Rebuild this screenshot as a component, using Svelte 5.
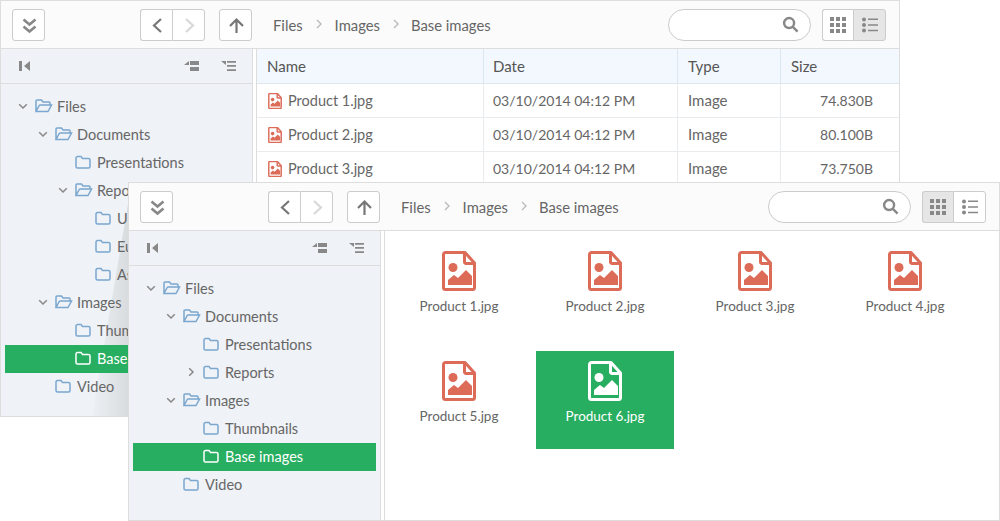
<script>
  const folderTree1 = [
    { n: 'Files', l: 0, open: true },
    { n: 'Documents', l: 1, open: true },
    { n: 'Presentations', l: 2 },
    { n: 'Reports', l: 2, open: true },
    { n: 'USA', l: 3 },
    { n: 'Europe', l: 3 },
    { n: 'Asia', l: 3 },
    { n: 'Images', l: 1, open: true },
    { n: 'Thumbnails', l: 2 },
    { n: 'Base images', l: 2, sel: true },
    { n: 'Video', l: 1 }
  ];
  const folderTree2 = [
    { n: 'Files', l: 0, open: true },
    { n: 'Documents', l: 1, open: true },
    { n: 'Presentations', l: 2 },
    { n: 'Reports', l: 2, closed: true },
    { n: 'Images', l: 1, open: true },
    { n: 'Thumbnails', l: 2 },
    { n: 'Base images', l: 2, sel: true },
    { n: 'Video', l: 1 }
  ];
  const rows = [
    ['Product 1.jpg', '74.830B'],
    ['Product 2.jpg', '80.100B'],
    ['Product 3.jpg', '73.750B']
  ];
  const tiles = ['Product 1.jpg', 'Product 2.jpg', 'Product 3.jpg', 'Product 4.jpg', 'Product 5.jpg', 'Product 6.jpg'];
</script>

{#snippet fileIcon()}
  <svg class="file" viewBox="0 0 34 40">
    <path class="fl" d="M1.500 3.500a2 2 0 0 1 2-2h19.500l9.500 10.500v24.500a2 2 0 0 1-2 2h-27a2 2 0 0 1-2-2z" />
    <path class="fl" d="M22.500 1.500v9.500a1.500 1.500 0 0 0 1.500 1.500h8.500" />
    <circle class="fi" cx="11" cy="16.500" r="4.500" />
    <path class="fi" d="M6 34v-5l6-5 4 3 8-8 6 6v9z" />
  </svg>
{/snippet}

{#snippet toolbar(grid)}
  <div class="toolbar">
    <button class="btn" aria-label="Collapse">
      <svg viewBox="0 0 32 32"><path class="ic" d="M10.500 10.500l6 5 6-5M10.500 17.500l6 5 6-5" /></svg>
    </button>
    <div class="group nav">
      <button class="btn" aria-label="Back">
        <svg viewBox="0 0 32 32"><path class="ic dark" d="M20 10l-7 6.500 7 6.500" /></svg>
      </button>
      <button class="btn" aria-label="Forward">
        <svg viewBox="0 0 32 32"><path class="ic pale" d="M13 10l7 6.500-7 6.500" /></svg>
      </button>
    </div>
    <button class="btn up" aria-label="Up">
      <svg viewBox="0 0 32 32"><path class="ic dark" d="M16.500 24V11M10 17l6.500-6.500L23 17" /></svg>
    </button>
    <nav class="crumbs">
      <span>Files</span>
      <svg class="sep" viewBox="0 0 8 12"><path d="M2 2l4 4-4 4" /></svg>
      <span>Images</span>
      <svg class="sep second" viewBox="0 0 8 12"><path d="M2 2l4 4-4 4" /></svg>
      <span>Base images</span>
    </nav>
    <div class="search">
      <svg viewBox="0 0 18 18"><circle cx="7.500" cy="7.500" r="5.300" /><path d="M11.500 11.500l5 5" /></svg>
    </div>
    <div class="group views">
      <button class="btn" class:on={grid} aria-label="Grid">
        <svg viewBox="0 0 16 16"><path class="dots" d="M0 0h4v4H0zM6 0h4v4H6zM12 0h4v4h-4zM0 6h4v4H0zM6 6h4v4H6zM12 6h4v4h-4zM0 12h4v4H0zM6 12h4v4H6zM12 12h4v4h-4z" /></svg>
      </button>
      <button class="btn" class:on={!grid} aria-label="List">
        <svg viewBox="0 0 16 16"><circle class="dots" cx="2" cy="2.500" r="2" /><circle class="dots" cx="2" cy="8" r="2" /><circle class="dots" cx="2" cy="13.500" r="2" /><path class="dots" d="M6 1.500h10v1.500H6zM6 7.200h10v1.500H6zM6 12.800h10v1.500H6z" /></svg>
      </button>
    </div>
  </div>
{/snippet}

{#snippet sidebar(items, shaded)}
  <aside class="side">
    {#if shaded}<span class="shade"></span>{/if}
    <div class="side-head">
      <svg class="sh" viewBox="0 0 11 10"><path d="M0 0h3v10H0zM11 0v10L5 5z" /></svg>
      <span class="grow"></span>
      <svg class="sh wide" viewBox="0 0 15 10"><path d="M0 4l5-4v4zM6 0h9v4H6zM6 6h9v4H6z" /></svg>
      <svg class="sh wide" viewBox="0 0 15 10"><path d="M0 0h5v4zM6 0h9v1.800H6zM6 4h9v1.800H6zM6 8.200h9V10H6z" /></svg>
    </div>
    <div class="tree">
      {#each items as it}
        <div class="row" class:sel={it.sel} style={`padding-left:${10 + it.l * 20}px`}>
          <span class="tog">
            {#if it.open}
              <svg viewBox="0 0 10 10"><path d="M1.200 3.200l3.800 3.800 3.800-3.800" /></svg>
            {:else if it.closed}
              <svg viewBox="0 0 10 10"><path d="M3.200 1.200l3.800 3.800-3.800 3.800" /></svg>
            {/if}
          </span>
          <span class="fold">
            {#if it.open}
              <svg viewBox="0 0 18 14"><path d="M1 12.500V2a1 1 0 0 1 1-1h4.500l1.500 2h6a1 1 0 0 1 1 1v2M1 12.500l3.200-6a1 1 0 0 1 .9-.5H16.500l-3.500 6.500z" /></svg>
            {:else}
              <svg class="closed" viewBox="0 0 16 14"><path d="M1 3a1.500 1.500 0 0 1 1.500-1.500H6l1.500 2h6A1.500 1.500 0 0 1 15 5v6.500a1.500 1.500 0 0 1-1.500 1.500h-11A1.500 1.500 0 0 1 1 11.500z" /></svg>
            {/if}
          </span>
          <span class="lbl">{it.n}</span>
        </div>
      {/each}
    </div>
  </aside>
  <div class="resizer"><span class="grip"></span></div>
{/snippet}

<div class="stage">
  <section class="win back">
    {@render toolbar(false)}
    <div class="body">
      {@render sidebar(folderTree1, true)}
      <div class="main">
        <div class="t-row head">
          <div class="c name">Name</div><div class="c">Date</div><div class="c">Type</div><div class="c">Size</div>
        </div>
        {#each rows as r}
          <div class="t-row">
            <div class="c name small"><span class="mini">{@render fileIcon()}</span>{r[0]}</div>
            <div class="c tiny">03/10/2014 04:12 PM</div>
            <div class="c lift">Image</div>
            <div class="c num tiny">{r[1]}</div>
          </div>
        {/each}
      </div>
    </div>
  </section>

  <section class="win front">
    {@render toolbar(true)}
    <div class="body">
      {@render sidebar(folderTree2, false)}
      <div class="main tiles">
        {#each tiles as t, i}
          <div class="tile" class:sel={i === 5}>
            {@render fileIcon()}
            <span>{t}</span>
          </div>
        {/each}
      </div>
    </div>
  </section>
</div>

<style>
  :global(body) { margin: 0; background: #fff; }
  .stage {
    position: relative;
    width: 1000px;
    height: 521px;
    overflow: hidden;
    font-family: "Lato", "Noto Sans", sans-serif;
    font-size: 15px;
    color: #666;
  }
  .win {
    position: absolute;
    box-sizing: border-box;
    display: flex;
    flex-direction: column;
    background: #fff;
    border: 1px solid #ddd;
  }
  .back { left: 0; top: 0; width: 900px; height: 417px; }
  .front { left: 128px; top: 182px; width: 872px; height: 339px; }

  .toolbar {
    display: flex;
    align-items: center;
    box-sizing: border-box;
    height: 48px;
    flex: none;
    padding: 0 13px 0 11px;
    background: #fbfbfb;
    border-bottom: 1px solid #ddd;
  }
  .btn {
    box-sizing: border-box;
    width: 33px;
    height: 32px;
    padding: 0;
    display: flex;
    align-items: center;
    justify-content: center;
    background: #fff;
    border: 1px solid #ccc;
    border-radius: 3px;
  }
  .btn svg { width: 32px; height: 32px; flex: none; }
  .ic { fill: none; stroke: #888; stroke-width: 2.6; }
  .ic.dark { stroke: #777; stroke-width: 2.2; }
  .ic.pale { stroke: #d8d8d8; stroke-width: 2.2; }
  .group { display: flex; }
  .group .btn:first-child { width: 32px; border-radius: 3px 0 0 3px; border-right: 0; }
  .group .btn:last-child { border-radius: 0 3px 3px 0; }
  .nav { margin-left: 95px; }
  .up { margin-left: 14px; }
  .crumbs {
    display: flex;
    align-items: center;
    margin: 1px 0 0 21px;
    flex: 1;
    font-size: 14.8px;
    line-height: 20px;
  }
  .sep { width: 8px; height: 12px; margin: 0 12px 2px; }
  .sep.second { margin-right: 11px; }
  .sep path { fill: none; stroke: #bbb; stroke-width: 1.4; }
  .search {
    box-sizing: border-box;
    width: 143px;
    height: 32px;
    margin-right: 11px;
    border: 1px solid #ccc;
    border-radius: 16px;
    background: #fff;
    display: flex;
    align-items: center;
    justify-content: flex-end;
    padding-right: 11px;
  }
  .search svg { width: 17px; height: 17px; }
  .search circle, .search path { fill: none; stroke: #888; stroke-width: 2.6; }
  .views .btn:first-child { width: 31px; }
  .views .btn svg { width: 16px; height: 16px; }
  .btn.on { background: #e6e6e6; }
  .dots { fill: #888; }

  .body { flex: 1; display: flex; min-height: 0; }
  .side {
    position: relative;
    box-sizing: border-box;
    width: 252px;
    flex: none;
    background: #eff2f6;
    border-right: 1px solid #ddd;
    display: flex;
    flex-direction: column;
  }
  .shade {
    position: absolute;
    left: 87px;
    top: 155px;
    width: 40px;
    bottom: 0;
    background: linear-gradient(to right, rgba(210, 213, 217, 0), #d9dcdf);
    clip-path: polygon(100% 0, 100% 100%, 10% 100%);
  }
  .side-head {
    box-sizing: border-box;
    height: 35px;
    flex: none;
    display: flex;
    align-items: center;
    padding: 0 16px 0 18px;
    border-bottom: 1px solid #ddd;
  }
  .grow { flex: 1; }
  .sh { width: 11px; height: 10px; fill: #888; }
  .sh.wide { width: 15px; height: 10px; margin-left: 22px; }
  .tree { position: relative; padding: 9px 4px; font-size: 14.5px; }
  .row {
    display: flex;
    align-items: center;
    height: 28px;
    box-sizing: border-box;
    padding-bottom: 2px;
    white-space: nowrap;
  }
  .row.sel { background: #27ae60; color: #fff; }
  .tog { width: 16px; flex: none; display: flex; justify-content: center; }
  .tog svg { width: 10px; height: 10px; fill: none; stroke: #888; stroke-width: 1.5; }
  .fold { width: 22px; flex: none; display: flex; justify-content: flex-end; margin-right: 4px; }
  .fold svg { width: 18px; height: 14px; fill: none; stroke: #7ba7cf; stroke-width: 1.5; }
  .fold svg.closed { width: 16px; margin-right: 2px; }
  .sel .fold svg { stroke: #fff; }

  .resizer {
    box-sizing: border-box;
    width: 4px;
    flex: none;
    padding-top: 12px;
    border-right: 1px solid #ddd;
    background: #fff;
    display: flex;
    align-items: center;
  }
  .grip {
    width: 3px;
    height: 24px;
    background-image: radial-gradient(#bbb 0.5px, transparent 0.6px);
    background-size: 2px 2px;
  }
  .main { flex: 1; min-width: 0; overflow: hidden; background: #fff; }
  .t-row {
    display: grid;
    grid-template-columns: 227px 194px 103px 1fr;
    height: 34px;
    box-sizing: border-box;
    border-bottom: 1px solid #e9ecef;
  }
  .t-row.head { background: #f2f8fe; height: 35px; border-bottom: 1px solid #dbe6ee; color: #555; }
  .c {
    display: flex;
    align-items: center;
    padding-left: 10px;
    border-right: 1px solid #e9ecef;
    white-space: nowrap;
  }
  .c:nth-child(2) { padding-left: 9px; }
  .head .c { border-right-color: #dbe6ee; padding-bottom: 1px; }
  .c:last-child { border-right: 0; }
  .c.lift { padding-bottom: 2px; }
  .c.small { font-size: 14.5px; }
  .c.tiny { font-size: 14px; }
  .c.num { justify-content: flex-end; padding-right: 26px; }
  .mini { width: 14px; height: 16px; margin: 0 6px 0 1px; display: inline-flex; }
  .mini :global(svg) { width: 14px; height: 16px; }
  .mini :global(.fl) { stroke-width: 3.6; }

  .tiles {
    display: grid;
    grid-template-columns: 130px 138px 138px 138px;
    grid-auto-rows: 98px;
    gap: 12px;
    padding: 10px 9px;
    align-content: start;
  }
  .tile {
    display: flex;
    flex-direction: column;
    align-items: center;
    padding-top: 10px;
    box-sizing: border-box;
    font-size: 13.5px;
    color: #666;
  }
  .tile span { margin-top: 5px; line-height: 20px; }
  .tile.sel { background: #27ae60; color: #fff; }
  :global(.file) { width: 34px; height: 40px; flex: none; }
  :global(.file .fl) { fill: none; stroke: #dc6b58; stroke-width: 3; stroke-linejoin: round; }
  :global(.file .fi) { fill: #dc6b58; }
  .tile.sel :global(.fl) { stroke: #fff; }
  .tile.sel :global(.fi) { fill: #fff; }
</style>
